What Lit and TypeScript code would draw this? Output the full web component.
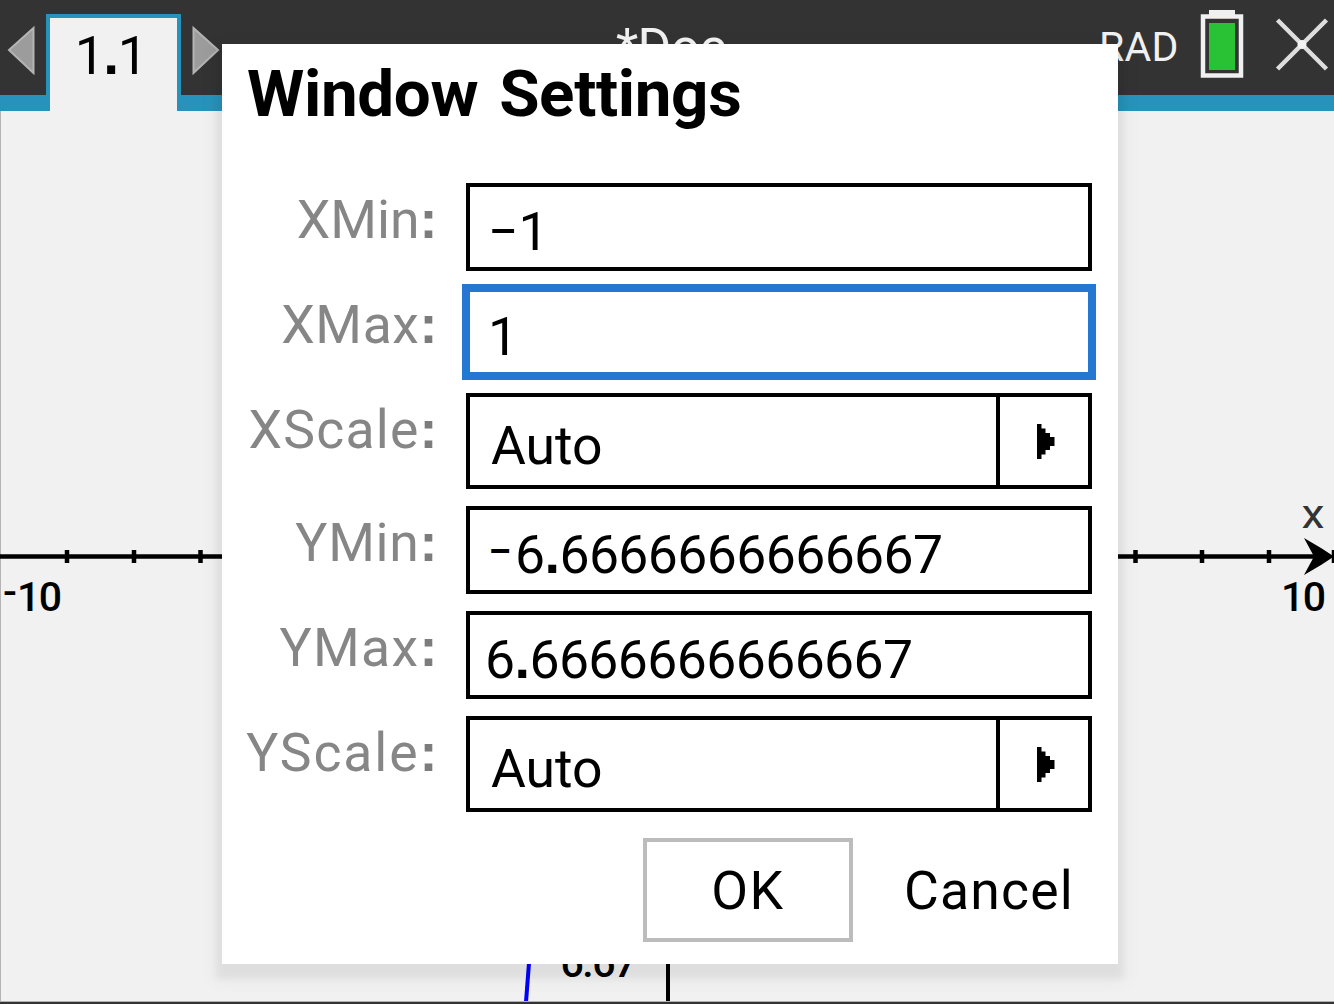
import { LitElement, html, svg, css } from "lit";
import { customElement, property } from "lit/decorators.js";
import { classMap } from "lit/directives/class-map.js";
import { styleMap } from "lit/directives/style-map.js";

type Field = { label: string; value: string; tracking: number; kind?: "menu"; focused?: boolean };

const FIELDS: Field[] = [
  { label: "XMin", value: "−1", tracking: 0 },
  { label: "XMax", value: "1", tracking: 0.6, focused: true },
  { label: "XScale", value: "Auto", tracking: 1.2, kind: "menu" },
  { label: "YMin", value: "⁻6.6666666666667", tracking: 0.7 },
  { label: "YMax", value: "6.6666666666667", tracking: 1.4 },
  { label: "YScale", value: "Auto", tracking: 1.9, kind: "menu" },
];

@customElement("setting-row")
class SettingRow extends LitElement {
  @property({ attribute: false }) field!: Field;

  static styles = css`
    :host { display: block; }
    .row { display: grid; grid-template-columns: 213px 626px; column-gap: 31px; }
    .label { text-align: right; color: #868686; line-height: 74px; height: 74px; white-space: nowrap; }
    .label.focused { margin-top: 4px; }
    .colon { font-family: "Liberation Sans", sans-serif; font-size: 54px; line-height: 0; font-weight: 700; letter-spacing: 0; margin: 0 -2.5px 0 0; color: #7c7c7c; }
    .box { box-sizing: border-box; border: 4px solid #000; background: #fff; height: 88px; display: flex; white-space: nowrap; }
    .value { flex: 1; line-height: 90px; padding-left: 18px; }
    .box.focused { border: 8px solid #2478d2; height: 96px; margin: 0 -4px; }
    .box.menu { height: 96px; }
    .menu .value { line-height: 98px; padding-left: 21px; }
    .number { padding-left: 15px; letter-spacing: -0.6px; }
    .point { font-family: "Liberation Sans", sans-serif; font-size: 56px; line-height: 0; font-weight: 700; }
    .neg { display: inline-block; line-height: 1; font-size: 43px; font-weight: 500; position: relative; top: -7px; width: 27px; margin-left: 3px; }
    .arrow { border-left: 4px solid #000; width: 92px; display: flex; align-items: center; justify-content: center; padding: 2px 0 0 4px; box-sizing: border-box; height: 88px; }
    svg { display: block; }
  `;

  private value(text: string) {
    const neg = text.startsWith("⁻");
    const [whole, frac] = (neg ? text.slice(1) : text).split(".");
    return html`${neg ? html`<span class="neg">−</span>` : ""}${whole}${frac ? html`<span class="point">.</span>${frac}` : ""}`;
  }

  render() {
    const f = this.field;
    const menu = f.kind === "menu";
    return html`<div class="row">
      <div class=${classMap({ label: true, focused: !!f.focused })} style=${styleMap({ letterSpacing: `${f.tracking}px` })}>${f.label}<span class="colon">:</span></div>
      <div class=${classMap({ box: true, focused: !!f.focused, menu })}>
        <div class=${classMap({ value: true, number: f.value.includes(".") })}>${this.value(f.value)}</div>
        ${menu
          ? html`<div class="arrow"><svg width="18" height="36" viewBox="0 0 18 36"><path d="M0 0H4.500V4.500H8.500V9H13V13H17.500V22H13V26H8.500V30.500H4.500V35H0Z" /></svg></div>`
          : ""}
      </div>
    </div>`;
  }
}

@customElement("app-root")
class AppRoot extends LitElement {
  static styles = css`
    :host { display: block; font-family: Roboto, "Liberation Sans", sans-serif; font-size: 53.5px; color: #000; }
    .screen { position: relative; box-sizing: border-box; width: 1334px; height: 1004px; overflow: hidden; display: flex; flex-direction: column; background: #f1f1f1; }
    .bar { box-sizing: border-box; height: 111px; background: #333; display: flex; border-bottom: 16px solid #2793bc; flex: none; }
    .bar svg { display: block; flex: none; }
    .prev { margin: 25px 10px 0 6px; }
    .next { margin: 25px 0 0 10px; }
    .tab { box-sizing: border-box; width: 135px; height: 97px; margin-top: 14px; padding: 4px 6px 0 0; border: 4px solid #2793bc; border-bottom: 0; background: #f1f1f1; text-align: center; line-height: 67px; letter-spacing: -1.5px; }
    .tab b { font-family: "Liberation Sans", sans-serif; font-size: 57px; line-height: 0; font-weight: 700; }
    .doc { margin-left: 395px; line-height: 95px; color: #f1f1f1; width: 483px; white-space: nowrap; font-size: 51.5px; letter-spacing: -0.6px; }
    .rad { font-size: 41px; line-height: 95px; color: #f1f1f1; width: 101px; letter-spacing: 0.2px; }
    .battery { margin-top: 8px; }
    .close { margin: 14px 0 0 28px; }
    .graph { display: block; flex: none; }
    .graph text { font-size: 41px; font-weight: 500; letter-spacing: -1.5px; }
    .graph .axis-name { font-weight: 400; fill: #333; letter-spacing: 0; }
    .dialog { position: absolute; left: 222px; top: 44px; width: 896px; height: 920px; background: #fff; box-sizing: border-box; box-shadow: 0 9px 6px 6px rgba(0, 0, 0, 0.045), 0 9px 16px 10px rgba(0, 0, 0, 0.035); }
    .title { margin: 0; font-size: 65.5px; font-weight: 700; line-height: 99px; padding-left: 25px; height: 139px; box-sizing: border-box; white-space: nowrap; word-spacing: 5px; letter-spacing: -0.35px; }
    .rows { display: flex; flex-direction: column; gap: 17px; }
    .rows .tight { margin-top: -4px; }
    .actions { display: flex; margin: 26px 0 0 421px; }
    .ok { box-sizing: border-box; width: 210px; height: 104px; border: 4px solid #bcbcbc; text-align: center; line-height: 98px; letter-spacing: 1.5px; }
    .cancel { line-height: 106px; margin-left: 51px; letter-spacing: 1.2px; }
  `;

  render() {
    return html`<div class="screen">
      <div class="bar">
        <svg class="prev" width="30" height="50" viewBox="0 0 30 50"><path d="M3 25L27.500 3V48Z" fill="#9c9c9c" stroke="#b4b4b4" stroke-width="2" /></svg>
        <div class="tab">1<b>.</b>1</div>
        <svg class="next" width="30" height="50" viewBox="0 0 30 50"><path d="M27 25L2.500 3V48Z" fill="#9c9c9c" stroke="#b4b4b4" stroke-width="2" /></svg>
        <div class="doc">*Doc</div>
        <div class="rad">RAD</div>
        <svg class="battery" width="46" height="72" viewBox="0 0 46 72">
          <rect x="3" y="8.500" width="38" height="59" fill="none" stroke="#f0f0f0" stroke-width="4.500" />
          <rect x="9" y="2" width="26" height="7" fill="#f0f0f0" />
          <rect x="9" y="15" width="26" height="47" fill="#28c234" />
        </svg>
        <svg class="close" width="60" height="60" viewBox="0 0 60 60"><path d="M3.500 6L52.500 55M52.500 6L3.500 55" stroke="#dedede" stroke-width="4.500" /><circle cx="28" cy="30.500" r="4.500" fill="#f1f1f1" /></svg>
      </div>
      <svg class="graph" width="1334" height="893" viewBox="0 111 1334 893">
        <path d="M0.500 111V1004" stroke="#b4b4b4" />
        <path d="M0 556.500H1330" stroke="#000" stroke-width="4.500" />
        ${[67, 134, 200.5, 1135.5, 1202, 1269, 1334].map((x) => svg`<path d="M${x} 550V563" stroke="#000" stroke-width="4.500" />`)}
        <path d="M1304 538L1321 548L1334 556.500L1321 565L1304 575L1314 556.500Z" />
        <text class="axis-name" x="1301.500" y="527.500" textLength="23" lengthAdjust="spacingAndGlyphs">x</text>
        <text x="3" y="606">-</text>
        <text x="17" y="611">10</text>
        <text x="1281" y="611">10</text>
        <text x="560.500" y="977">6.67</text>
        <path d="M530 950L526 1002" stroke="#00f" stroke-width="4" />
        <path d="M668 950V1002" stroke="#000" stroke-width="4" />
        <path d="M0 1001.500H1334" stroke="#b0b0b0" />
        <rect x="0" y="1002" width="1334" height="2" fill="#333" />
      </svg>
      <div class="dialog">
        <h1 class="title">Window Settings</h1>
        <div class="rows">
          ${FIELDS.map((f, i) => html`<setting-row class=${i === 1 || i === 2 ? "tight" : ""} .field=${f}></setting-row>`)}
        </div>
        <div class="actions">
          <div class="ok">OK</div>
          <div class="cancel">Cancel</div>
        </div>
      </div>
    </div>`;
  }
}
